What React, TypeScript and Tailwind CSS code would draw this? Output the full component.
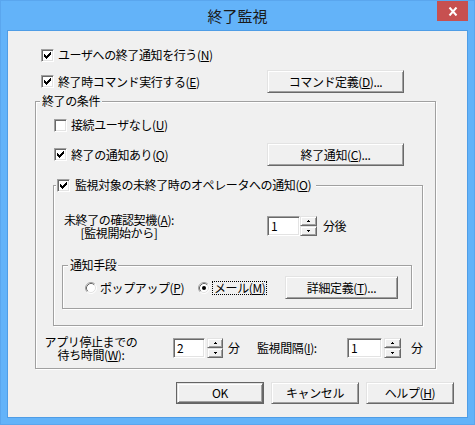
import React from "react";

const F = "font-['Noto_Sans_CJK_JP','Noto_Sans_CJK_SC',sans-serif]";

function U({ c }: { c: string }) {
  return <span className="underline underline-offset-[1px] decoration-1">{c}</span>;
}

const CHECK = [
  "......#",
  ".....##",
  "#...###",
  "##.###.",
  "#####..",
  ".###...",
  "..#....",
];

function Check({ checked }: { checked?: boolean }) {
  return (
    <span className="w-[13px] h-[13px] shrink-0 bg-white border border-t-[#a0a0a0] border-l-[#a0a0a0] border-r-white border-b-white shadow-[inset_1px_1px_0_#696969,inset_-1px_-1px_0_#e3e3e3] flex">
      {checked && (
        <svg width="11" height="11" viewBox="0 0 11 11" shapeRendering="crispEdges">
          {CHECK.flatMap((row, r) =>
            row.split("").map((ch, c) =>
              ch === "#" ? <rect key={`${r}-${c}`} x={c + 2} y={r + 2} width="1" height="1" fill="#000" /> : null
            )
          )}
        </svg>
      )}
    </span>
  );
}

function CheckLabel({ checked, children, gap = "gap-[4px]" }: { checked?: boolean; children: React.ReactNode; gap?: string }) {
  return (
    <span className={`flex items-center whitespace-nowrap ${gap}`}>
      <Check checked={checked} />
      <span>{children}</span>
    </span>
  );
}

function Radio({ checked }: { checked?: boolean }) {
  return (
    <svg width="12" height="12" viewBox="0 0 12 12" className="shrink-0">
      <circle cx="6" cy="6" r="5" fill="#fff" />
      <path d="M2.11 9.89 A5.5 5.5 0 0 1 9.89 2.11" stroke="#a0a0a0" fill="none" />
      <path d="M9.89 2.11 A5.5 5.5 0 0 1 2.11 9.89" stroke="#fff" fill="none" />
      <path d="M2.82 9.18 A4.5 4.5 0 0 1 9.18 2.82" stroke="#696969" fill="none" />
      <path d="M9.18 2.82 A4.5 4.5 0 0 1 2.82 9.18" stroke="#e3e3e3" fill="none" />
      {checked && <circle cx="6" cy="6" r="2" fill="#000" />}
    </svg>
  );
}

function Btn({ children, cls, def }: { children: React.ReactNode; cls: string; def?: boolean }) {
  const inner = (
    <div
      className={`flex items-center justify-center whitespace-nowrap bg-[#f0f0f0] border border-t-[#e3e3e3] border-l-[#e3e3e3] border-r-[#696969] border-b-[#696969] shadow-[inset_1px_1px_0_#fff,inset_-1px_-1px_0_#a0a0a0] ${def ? "w-full h-full" : cls}`}
    >
      {children}
    </div>
  );
  if (def) return <div className={`border border-[#646464] flex ${cls}`}>{inner}</div>;
  return inner;
}

function SpinBtn({ up }: { up?: boolean }) {
  return (
    <div className="flex-1 flex items-center justify-center bg-[#f0f0f0] border border-t-[#e3e3e3] border-l-[#e3e3e3] border-r-[#696969] border-b-[#696969] shadow-[inset_1px_1px_0_#fff,inset_-1px_-1px_0_#a0a0a0]">
      <svg width="3" height="2" viewBox="0 0 3 2" shapeRendering="crispEdges">
        {up ? (
          <>
            <rect x="1" y="0" width="1" height="1" fill="#000" />
            <rect x="0" y="1" width="3" height="1" fill="#000" />
          </>
        ) : (
          <>
            <rect x="0" y="0" width="3" height="1" fill="#000" />
            <rect x="1" y="1" width="1" height="1" fill="#000" />
          </>
        )}
      </svg>
    </div>
  );
}

function Spin({ value, inputCls, btnCls, gap }: { value: string; inputCls: string; btnCls: string; gap: string }) {
  return (
    <div className={`flex items-center ${gap}`}>
      <div
        className={`h-[20px] bg-white border border-t-[#a0a0a0] border-l-[#a0a0a0] border-r-white border-b-white shadow-[inset_1px_1px_0_#696969,inset_-1px_-1px_0_#e3e3e3] flex items-center pl-[3px] ${inputCls}`}
      >
        {value}
      </div>
      <div className={`h-[20px] flex flex-col ${btnCls}`}>
        <SpinBtn up />
        <SpinBtn />
      </div>
    </div>
  );
}

const GROUP = "border border-[#a0a0a0] shadow-[inset_1px_1px_0_#fff,1px_1px_0_#fff]";

export default function App() {
  return (
    <div
      className={`w-[475px] h-[425px] bg-[#63b3f9] border border-[#5aa6ee] flex flex-col px-[6px] pb-[6px] text-black ${F}`}
    >
      <div className="h-[29px] relative flex items-center justify-center shrink-0">
        <span className="text-[15px] leading-[16px] text-[#1a1a1a]">終了監視</span>
        <div className="absolute right-0 top-0 w-[31px] h-[20px] bg-[#c75050] flex items-center justify-center">
          <svg width="10" height="9" viewBox="0 0 10 9">
            <path d="M1.5 0.5 L8.5 8.5 M8.5 0.5 L1.5 8.5" stroke="#fff" strokeWidth="2" />
          </svg>
        </div>
      </div>

      <div className="flex-1 border border-[#4f9de6] bg-[#f0f0f0] text-[12px] leading-[14px] tracking-[-0.4px]">
        <div className="mt-[14px] h-[20px] pl-[33px] flex items-center">
          <CheckLabel checked>
            ユーザへの終了通知を行う(<U c="N" />)
          </CheckLabel>
        </div>

        <div className="mt-[5px] h-[23px] pl-[33px] flex items-center">
          <div className="w-[226px] flex items-center">
            <CheckLabel checked>
              終了時コマンド実行する(<U c="E" />)
            </CheckLabel>
          </div>
          <Btn cls="w-[137px] h-[23px]">
            コマンド定義(<U c="D" />)...
          </Btn>
        </div>

        <fieldset className={`mt-[1px] ml-[27px] mr-[31px] ${GROUP}`}>
          <legend className="ml-[4px] px-[2px] leading-[14px] bg-[#f0f0f0]">終了の条件</legend>
          <div className="pt-[7px] pb-[7px]">
            <div className="h-[20px] pl-[18px] flex items-center">
              <CheckLabel>
                接続ユーザなし(<U c="U" />)
              </CheckLabel>
            </div>

            <div className="mt-[8px] h-[23px] pl-[18px] flex items-center">
              <div className="w-[213px] flex items-center">
                <CheckLabel checked>
                  終了の通知あり(<U c="Q" />)
                </CheckLabel>
              </div>
              <Btn cls="w-[137px] h-[23px]">
                終了通知(<U c="C" />)...
              </Btn>
            </div>

            <fieldset className={`mt-[12px] ml-[17px] mr-[12px] ${GROUP}`}>
              <legend className="ml-[2px] pl-[1px] pr-[5px] bg-[#f0f0f0]">
                <div className="h-[14px] flex items-center">
                  <CheckLabel checked gap="gap-[5px]">
                    監視対象の未終了時のオペレータへの通知(<U c="O" />)
                  </CheckLabel>
                </div>
              </legend>
              <div className="pt-[21px] pb-[16px]">
                <div className="h-[26px] flex items-center">
                  <div className="w-[130px] text-center leading-[13px] whitespace-nowrap">
                    <div>
                      未終了の確認契機(<U c="A" />):
                    </div>
                    <div>[監視開始から]</div>
                  </div>
                  <div className="ml-[83px]">
                    <Spin value="1" inputCls="w-[33px]" btnCls="w-[17px]" gap="gap-0" />
                  </div>
                  <span className="ml-[6px]">分後</span>
                </div>

                <fieldset className={`mt-[19px] ml-[8px] mr-[10px] ${GROUP}`}>
                  <legend className="ml-[5px] px-[2px] leading-[14px] bg-[#f0f0f0]">通知手段</legend>
                  <div className="pt-[4px] pb-[9px]">
                    <div className="h-[23px] pl-[22px] flex items-center">
                      <div className="w-[113px] flex items-center gap-[3px] whitespace-nowrap">
                        <Radio />
                        <span>
                          ポップアップ(<U c="P" />)
                        </span>
                      </div>
                      <div className="w-[87px] flex items-center gap-[2px] whitespace-nowrap">
                        <Radio checked />
                        <span className="border border-dotted border-black leading-[12px] px-[1px]">
                          メール(<U c="M" />)
                        </span>
                      </div>
                      <Btn cls="w-[113px] h-[23px]">
                        詳細定義(<U c="T" />)...
                      </Btn>
                    </div>
                  </div>
                </fieldset>
              </div>
            </fieldset>

            <div className="mt-[9px] h-[26px] flex items-center whitespace-nowrap">
              <div className="w-[110px] text-center leading-[13px]">
                <div>アプリ停止までの</div>
                <div>
                  待ち時間(<U c="W" />):
                </div>
              </div>
              <div className="ml-[27px]">
                <Spin value="2" inputCls="w-[32px]" btnCls="w-[16px]" gap="gap-[2px]" />
              </div>
              <span className="ml-[5px] w-[29px]">分</span>
              <span className="w-[90px]">
                監視間隔(<U c="I" />):
              </span>
              <Spin value="1" inputCls="w-[35px]" btnCls="w-[17px]" gap="gap-[2px]" />
              <span className="ml-[10px]">分</span>
            </div>
          </div>
        </fieldset>

        <div className="mt-[13px] pr-[13px] flex justify-end gap-[7px]">
          <Btn cls="w-[88px] h-[22px]" def>
            OK
          </Btn>
          <Btn cls="w-[88px] h-[22px]">キャンセル</Btn>
          <Btn cls="w-[88px] h-[22px]">
            ヘルプ(<U c="H" />)
          </Btn>
        </div>
      </div>
    </div>
  );
}
